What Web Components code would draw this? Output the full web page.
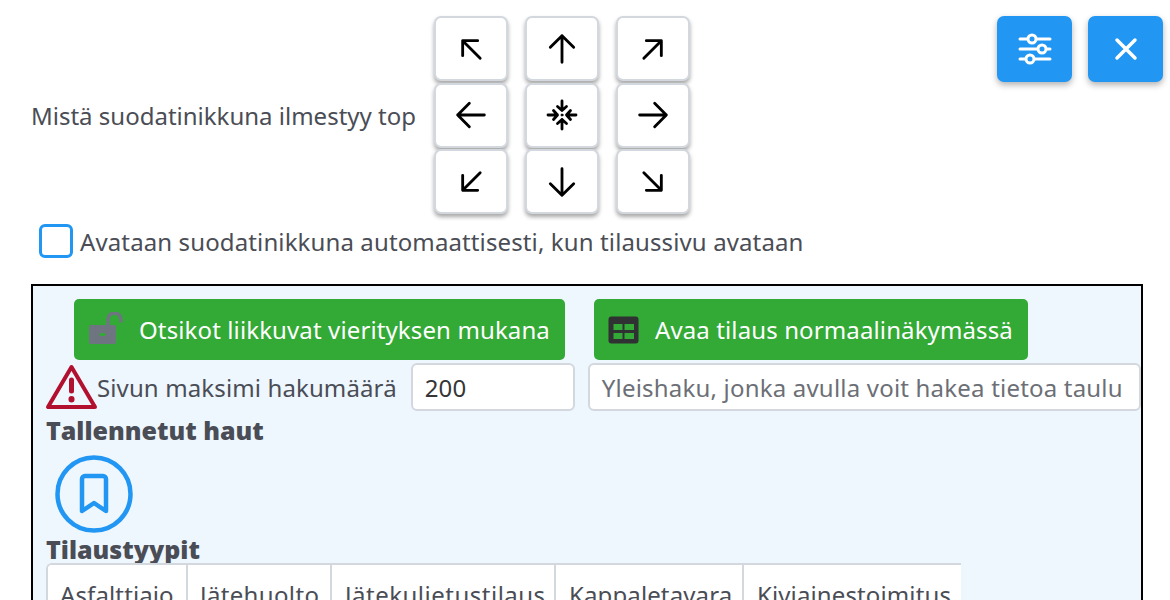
<!DOCTYPE html>
<html><head><meta charset="utf-8"><style>
html,body{margin:0;height:600px;overflow:hidden;background:#fff;font-family:"Noto Sans",sans-serif;color:#4a4d55;font-size:24px;letter-spacing:.12px}
</style></head><body>
<app-root></app-root>
<script>
const svg=(inner,s=40,vb=24,sw=1.7)=>`<svg width="${s}" height="${s}" viewBox="0 0 ${vb} ${vb}" fill="none" stroke="currentColor" stroke-width="${sw}" stroke-linecap="round" stroke-linejoin="round">${inner}</svg>`;
const def=(n,html)=>customElements.define(n,class extends HTMLElement{constructor(){super();this.attachShadow({mode:'open'}).innerHTML=html}});
const ic={
nw:'<path d="M17.500 17.500 7 7M7 16V7h9"/>',n:'<path d="M12 20V4M5 11l7-7 7 7"/>',ne:'<path d="M6.500 17.500 17 7M8 7h9v9"/>',
w:'<path d="M20 12H4M11 5l-7 7 7 7"/>',e:'<path d="M4 12h16M13 5l7 7-7 7"/>',
sw:'<path d="M17.500 6.500 7 17M7 8v9h9"/>',s:'<path d="M12 4v16M5 13l7 7 7-7"/>',se:'<path d="M6.500 6.500 17 17M17 8v9H8"/>'
};
const center=`<svg width="32" height="32" viewBox="0 0 32 32" fill="none" stroke="currentColor" stroke-width="2.800" stroke-linecap="round" stroke-linejoin="round"><path d="M16 2v9.500M11.500 7.500 16 11.500l4.500-4M16 30v-9.500M11.500 24.500 16 20.500l4.500 4M2 16h9.500M7.500 11.500 11.500 16l-4 4.500M30 16h-9.500M24.500 11.500 20.500 16l4 4.500"/><circle cx="16" cy="16" r="1" fill="currentColor" stroke-width="1"/></svg>`;
def('dir-button',`<style>:host{display:flex;align-items:center;justify-content:center;width:74px;height:65px;box-sizing:border-box;background:#fff;border:2px solid #d3d7de;border-radius:7px;box-shadow:0 3px 4px rgba(0,0,0,.35);color:#000}</style><slot></slot>`);
def('fab-button',`<style>:host{display:flex;align-items:center;justify-content:center;width:75px;height:66px;background:#2196f3;border-radius:7px;box-shadow:0 3px 6px rgba(0,0,0,.3);color:#fff}</style><slot></slot>`);
def('green-button',`<style>:host{display:inline-flex;align-items:center;height:61px;box-sizing:border-box;background:#33a936;border-radius:5px;color:#fff;font-size:24px;white-space:nowrap;padding:0 15px 0 14px;gap:15px}</style><slot></slot>`);
def('text-field',`<style>:host{display:flex;align-items:center;height:48px;box-sizing:border-box;background:#fff;border:2px solid #d3d7de;border-radius:6px;padding:0 12px;font-size:24px;color:#363636;overflow:hidden;white-space:nowrap}</style><slot></slot>`);
def('tab-cell',`<style>:host{display:block;flex:none;border-right:2px solid #d3d7de;padding:13px 0 0 12px;height:50px;box-sizing:border-box;background:#fff;white-space:nowrap;font-size:24px;color:#4a4d55}</style><slot></slot>`);
def('filter-panel',`<style>:host{display:block;margin:26px 27px 0 31px;height:330px;box-sizing:border-box;border:2px solid #000;background:#eef6fe;padding:13px 0 0 12px;overflow:hidden}
.btns{display:flex;gap:29px;margin-left:29px}
.row{display:flex;align-items:center;height:48px;margin-top:3px;white-space:nowrap}
h3{margin:0 0 0 1px;font:800 25px/32px "Open Sans","Noto Sans",sans-serif;letter-spacing:0;color:#4a4d55}
.bm{display:block;margin:9px 0 0 10px;width:78px;height:78px;color:#2196f3}
.tabs{position:relative;display:flex;width:915px;margin-left:1px;margin-top:-2px;border-top:2px solid #d3d7de;border-left:2px solid #d3d7de;border-top-left-radius:6px;overflow:hidden;box-sizing:border-box;background:#fff}
</style>
<div class="btns">
<green-button><svg width="36" height="36" viewBox="0 0 36 36" style="flex:none"><path fill="#6f7580" fill-rule="evenodd" d="M3 13h23a2 2 0 0 1 2 2v15a2 2 0 0 1-2 2H3a2 2 0 0 1-2-2V15a2 2 0 0 1 2-2Zm11.500 8c-2 0-3.500.6-3.500 1.500s1.500 1.500 3.500 1.500 3.500-.6 3.500-1.500-1.500-1.500-3.500-1.500Z"/><path d="M20 13V7.500a6.500 6.500 0 0 1 13 0V9" fill="none" stroke="#6f7580" stroke-width="3.500" stroke-linecap="round"/></svg><span>Otsikot liikkuvat vierityksen mukana</span></green-button>
<green-button><svg width="32" height="32" viewBox="0 0 32 32" style="flex:none"><path fill="#2f3133" fill-rule="evenodd" d="M3.500 2.500h24a3 3 0 0 1 3 3v21a3 3 0 0 1-3 3h-24a3 3 0 0 1-3-3v-21a3 3 0 0 1 3-3ZM5.500 10v6h9v-6Zm11 0v6h9.500v-6ZM5.500 19v6h9v-6Zm11 0v6h9.500v-6Z"/></svg><span>Avaa tilaus normaalinäkymässä</span></green-button>
</div>
<div class="row">
<svg width="53" height="46" viewBox="0 0 53 46" style="flex:none" fill="none" stroke="#b2102f" stroke-width="4" stroke-linejoin="round" stroke-linecap="round"><path d="M26.500 3 3 43h47Z"/><path d="M26.500 16v11" stroke-width="5"/><path d="M26.500 35v.5" stroke-width="6"/></svg>
<span style="margin-left:-1px">Sivun maksimi hakumäärä</span>
<text-field style="width:164px;margin-left:14px">200</text-field>
<text-field style="width:553px;margin-left:13px;color:#6c6f76;letter-spacing:.2px"><span>Yleishaku, jonka avulla voit hakea tietoa taulu</span></text-field>
</div>
<h3 style="margin-top:3px">Tallennetut haut</h3>
<svg class="bm" viewBox="0 0 78 78" fill="none" stroke="currentColor" stroke-width="4.500" stroke-linejoin="round" stroke-linecap="round"><circle cx="39" cy="39" r="36.500"/><path d="M30 21h18a3 3 0 0 1 3 3v32L39 48 27 56V24a3 3 0 0 1 3-3Z"/></svg>
<h3 style="margin-top:0">Tilaustyypit</h3>
<div class="tabs"><tab-cell style="width:140px;padding-left:12px">Asfalttiajo</tab-cell><tab-cell style="width:144px;letter-spacing:.35px">Jätehuolto</tab-cell><tab-cell style="width:224px;padding-left:13px;letter-spacing:.5px">Jätekuljetustilaus</tab-cell><tab-cell style="width:188px;padding-left:13px">Kappaletavara</tab-cell><tab-cell style="width:217px;padding-left:13px;border-right:0">Kiviainestoimitus</tab-cell></div>`);
const cells=['nw','n','ne','w','c','e','sw','s','se'].map(k=>`<dir-button>${k=='c'?center:svg(ic[k])}</dir-button>`).join('');
def('app-root',`<style>:host{display:block;width:1170px}
.top{position:relative;display:flex;align-items:center;padding:16px 0 0 31px}
.grid{display:grid;grid-template-columns:repeat(3,74px);column-gap:17px;row-gap:1.500px;margin-left:17.600px}
.fabs{position:absolute;right:7px;top:16px;display:flex;gap:16px}
.chk{display:flex;align-items:center;margin:10px 0 0 39px;height:34px;white-space:nowrap}
.box{width:34px;height:34px;box-sizing:border-box;border:3px solid #2196f3;border-radius:6px;background:#fff;margin-right:7px}
</style>
<div class="top"><span style="letter-spacing:0">Mistä suodatinikkuna ilmestyy top</span><div class="grid">${cells}</div>
<div class="fabs"><fab-button><svg width="36" height="32" viewBox="0 0 36 32" fill="none" stroke="#fff" stroke-width="3"><path d="M3 6h30M3 16h30M3 26h30" stroke-linecap="round"/><circle cx="15" cy="6" r="4" fill="#2196f3"/><circle cx="25" cy="16" r="4" fill="#2196f3"/><circle cx="13" cy="26" r="4" fill="#2196f3"/></svg></fab-button>
<fab-button><svg width="24" height="24" viewBox="0 0 24 24" fill="none" stroke="#fff" stroke-width="3.500" stroke-linecap="round"><path d="M3 3l18 18M21 3 3 21"/></svg></fab-button></div></div>
<div class="chk"><div class="box"></div><span>Avataan suodatinikkuna automaattisesti, kun tilaussivu avataan</span></div>
<filter-panel></filter-panel>`);
</script></body></html>
